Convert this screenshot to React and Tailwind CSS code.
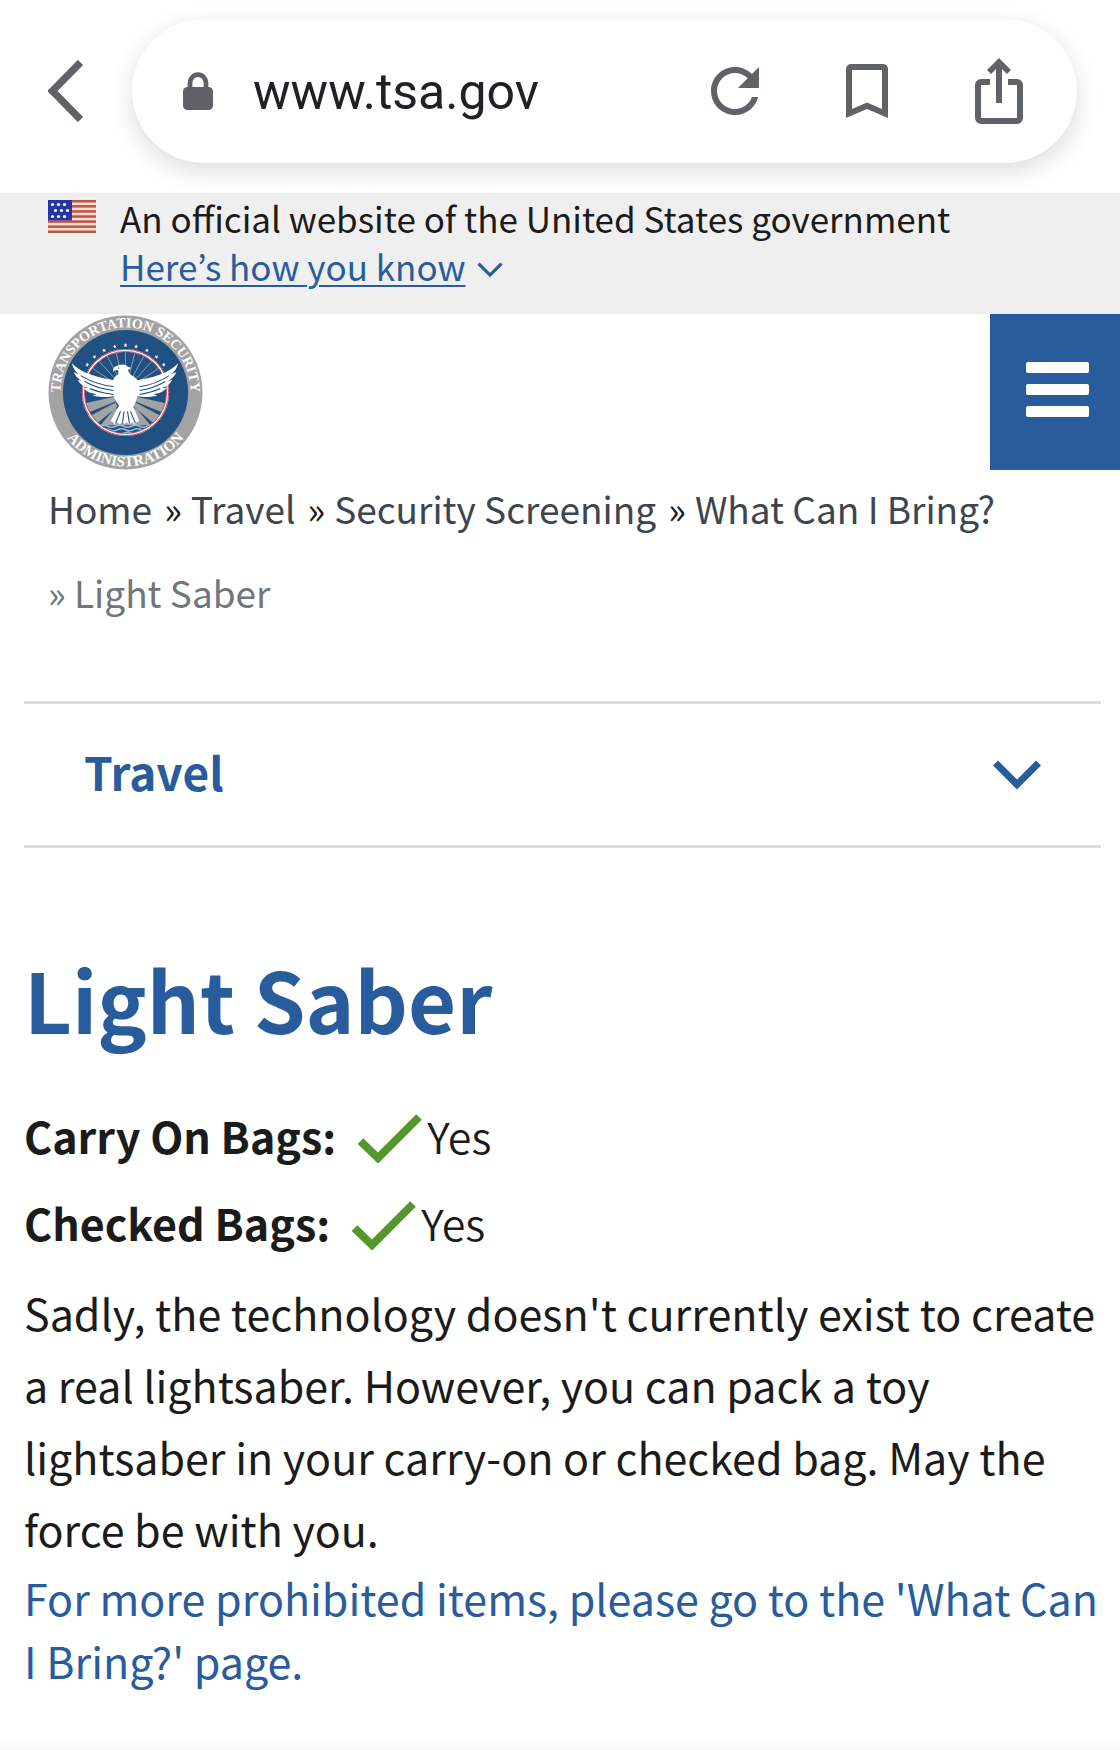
import React from "react";

const SANS = "font-['Noto_Sans_CJK_KR',sans-serif]";

function Check() {
  return (
    <svg viewBox="0 0 64 50" className="mt-1 h-[50px] w-16 shrink-0" fill="none" aria-hidden="true">
      <path d="M2.500 28 L20 45 L61 4" stroke="#53982b" strokeWidth="8" />
    </svg>
  );
}

function BrowserBar() {
  return (
    <div className="flex h-[193px] items-center pr-[43px] pb-[11px]">
      <button aria-label="Back" className="flex h-24 w-[132px] items-center justify-start pl-12">
        <svg viewBox="0 0 36 62" className="h-[62px] w-9" fill="none" aria-hidden="true">
          <path d="M32.500 2.500 L4.500 31 L32.500 59.500" stroke="#5f6368" strokeWidth="7.400" />
        </svg>
      </button>
      <div className="flex h-36 min-w-0 flex-1 items-center rounded-full bg-white pl-[51px] pr-[54px] shadow-[0_8px_24px_rgba(0,0,0,0.14)]">
        <svg viewBox="0 0 30 38" className="h-[38px] w-[30px] shrink-0" aria-hidden="true">
          <rect y="15" width="30" height="23" rx="4.500" fill="#5f6368" />
          <path d="M7 17 V11 a8 8.300 0 0 1 16 0 V17" fill="none" stroke="#5f6368" strokeWidth="4.800" />
        </svg>
        <input
          aria-label="Address"
          readOnly
          value="www.tsa.gov"
          className="ml-10 h-16 min-w-0 flex-1 bg-transparent pt-0.5 font-['Roboto',sans-serif] text-[50px] text-[#202124] outline-none"
        />
        <button aria-label="Reload" className="shrink-0">
          <svg viewBox="4 4 16 16" className="size-12" aria-hidden="true">
            <path
              fill="#5f6368"
              d="M17.650 6.350C16.200 4.900 14.210 4 12 4c-4.420 0-7.990 3.580-7.990 8s3.570 8 7.990 8c3.730 0 6.840-2.550 7.730-6h-2.080c-.82 2.330-3.040 4-5.650 4-3.310 0-6-2.690-6-6s2.690-6 6-6c1.660 0 3.140.69 4.220 1.780L13 11h7V4l-2.350 2.350z"
            />
          </svg>
        </button>
        <button aria-label="Bookmark" className="ml-[87px] shrink-0">
          <svg viewBox="0 0 42 54" className="h-[54px] w-[42px]" aria-hidden="true">
            <path d="M5 0 H37 a5 5 0 0 1 5 5 V54 L21 45 L0 54 V5 a5 5 0 0 1 5-5 Z M6 6 V45 L21 38.500 L36 45 V6 Z" fill="#5f6368" fillRule="evenodd" />
          </svg>
        </button>
        <button aria-label="Share" className="ml-[87px] shrink-0">
          <svg viewBox="0 0 48 66" className="h-[66px] w-12" aria-hidden="true">
            <path d="M24 0 L36 12 L32 16 L27 11 V45 H21 V11 L16 16 L12 12 Z" fill="#5f6368" />
            <path d="M15 21 H6 a6 6 0 0 0-6 6 V60 a6 6 0 0 0 6 6 H42 a6 6 0 0 0 6-6 V27 a6 6 0 0 0-6-6 H33 V27 H42 V60 H6 V27 H15 Z" fill="#5f6368" />
          </svg>
        </button>
      </div>
    </div>
  );
}

function Flag() {
  const stripes = [0, 1, 2, 3, 4, 5, 6];
  const stars = [[4, 4], [10, 4], [16, 4], [7, 10], [13, 10], [19, 10], [4, 16], [10, 16], [16, 16]];
  return (
    <svg viewBox="0 0 48 33" className="mt-[7px] h-[33px] w-12 shrink-0" role="img" aria-label="U.S. flag">
      <rect width="48" height="33" fill="#f8ded8" />
      {stripes.map((i) => (
        <rect key={i} y={i * 5.08} width="48" height="2.54" fill="#c05640" />
      ))}
      <rect width="24" height="20.500" fill="#2634a8" />
      {stars.map(([x, y]) => (
        <circle key={x + "-" + y} cx={x + 0.5} cy={y + 0.5} r="1.600" fill="#fff" />
      ))}
    </svg>
  );
}

function Seal() {
  const stars = [-54, -41, -27, -13, 0, 13, 27, 41, 54];
  const rays = [-70, -56, -42, -28, -14, 0, 14, 28, 42, 56, 70];
  return (
    <svg viewBox="0 0 156 156" className="size-[155px]" role="img" aria-label="Transportation Security Administration seal">
      <defs>
        <path id="seal-top" d="M14.500 95 A65.700 65.700 0 1 1 141.500 95" />
        <path id="seal-bottom" d="M7.500 102 A74.500 74.500 0 0 0 148.500 102" />
        <clipPath id="seal-disc"><circle cx="78" cy="78" r="41" /></clipPath>
      </defs>
      <circle cx="78" cy="78" r="77.500" fill="#a3a3a4" />
      <circle cx="78" cy="78" r="63" fill="#215083" />
      <g clipPath="url(#seal-disc)">
        {rays.map((a) => (
          <path key={a} d="M78 66 V36" stroke="#a9b3bf" strokeWidth="0.700" transform={`rotate(${a} 78 76)`} />
        ))}
        <path d="M68 82 L36 89 V100 L68 87 Z M68 88 L40 103 L46 112 L70 92 Z M67 94 L52 112 H104 L89 94 Z M88 82 L120 89 V100 L88 87 Z M88 88 L116 103 L110 112 L86 92 Z" fill="#a3a3a4" />
        <path d="M50 111 H106 L94 121 H62 Z" fill="#215083" />
        <path d="M52 112 q4-2 8 0 t8 0 8 0 8 0 8 0 8 0 8 0 M54 115.500 q4-2 8 0 t8 0 8 0 8 0 8 0 8 0 M60 119 q4-2 8 0 t8 0 8 0 8 0 8 0" fill="none" stroke="#8fbce0" strokeWidth="1.500" />
      </g>
      <circle cx="78" cy="78" r="42.500" fill="none" stroke="#fff" strokeWidth="2.800" />
      <circle cx="78" cy="78" r="43.400" fill="none" stroke="#c6415a" strokeWidth="0.900" />
      <circle cx="78" cy="78" r="41.400" fill="none" stroke="#c6415a" strokeWidth="0.800" />
      {stars.map((a) => (
        <path key={a} d="M0-2.200 L0.600-0.700 L2.100-0.700 L0.900 0.300 L1.300 1.800 L0 0.900 L-1.300 1.800 L-0.900 0.300 L-2.100-0.700 L-0.600-0.700 Z" fill="#fff" transform={`rotate(${a} 78 78) translate(78 30.500)`} />
      ))}
      <g fill="#fff">
        <path d="M65.500 56 q0-4 5-5.500 q7-2 10 1.500 l3 1 q-1 2-3 2 q1 5 6 7 l4 4 v13 q-2 11-6 15 h-10 q-8-7-9-16 v-12 q1-4 5-6 q1-4-1-5 l-3 1 q-1.500 2-1 0Z" />
        <path d="M72 90 L63 107 l3 1 1 3 2-3 3 2 3-2 2 2 2-2 3 2 3-2 2 3 2-3 3-1 L85 90Z" />
        <path d="M68 66 C58 64 36 61 24 48.500 c1 5 4 9 7 11 l-5-2 c2 5 5 7 9 9 l-5-1 c2 4 6 7 10 8 l-4 0 c3 4 8 6 13 6 l-4 1.500 c6 2 18 2 25 0Z" />
        <path d="M88 66 C99 64 119 61 131 48.500 c-1 5-4 9-7 11 l5-2 c-2 5-5 7-9 9 l5-1 c-2 4-6 7-10 8 l4 0 c-3 4-8 6-13 6 l4 1.500 c-6 2-16 2-23 0Z" />
      </g>
      <path d="M33 61 C44 68 57 71 66 72 M37 67 C47 73 58 75 66 76 M42 74 C51 78 60 79 66 80 M122 61 C111 68 101 71 92 72 M118 67 C108 73 100 75 92 76 M113 74 C104 78 98 79 92 80 M73 97 L68 109 M76.500 97 L75 109 M80 97 L82 109 M83 97 L88 109" fill="none" stroke="#215083" strokeWidth="1.100" />
      <circle cx="71" cy="53.500" r="0.700" fill="#215083" />
      <g fill="#fff" fontFamily="'Liberation Serif', serif" fontWeight="700">
        <text fontSize="14"><textPath href="#seal-top" startOffset="50%" textAnchor="middle">TRANSPORTATION SECURITY</textPath></text>
        <text fontSize="15"><textPath href="#seal-bottom" startOffset="50%" textAnchor="middle">ADMINISTRATION</textPath></text>
      </g>
    </svg>
  );
}

function Chevron({ className, width }) {
  return (
    <svg viewBox="0 0 48 30" className={className} fill="none" aria-hidden="true">
      <path d="M2.500 3 L24 24.500 L45.500 3" stroke="#285c9c" strokeWidth={width} />
    </svg>
  );
}

function BagRow({ label, answer }) {
  return (
    <div className="flex items-center">
      <dt className="font-bold">{label}</dt>
      <dd className="ml-[22px] flex items-center gap-[5px] font-[350]"><Check />{answer}</dd>
    </div>
  );
}

const crumbs = ["Home", "Travel", "Security Screening", "What Can I Bring?"];

export default function App() {
  return (
    <div className={`flex min-h-screen flex-col bg-white text-[#1b1b1b] ${SANS}`}>
      <BrowserBar />
      <section aria-label="Official government website" className="flex h-[121px] gap-6 bg-[#efefef] pl-12">
        <Flag />
        <div className="pt-px text-[35px] leading-[48px]">
          <p>An official website of the United States government</p>
          <button className="flex items-center gap-[11px] text-[#285c9c]">
            <span className="underline decoration-2 underline-offset-4">Here’s how you know</span>
            <Chevron className="mt-2 h-4 w-[26px]" width="6" />
          </button>
        </div>
      </section>
      <header className="flex h-[156px] items-center justify-between pl-12">
        <a href="#home"><Seal /></a>
        <button aria-label="Menu" className="flex h-full w-[130px] flex-col items-start justify-center gap-[11px] bg-[#285c9c] pb-1.5 pl-9">
          <span className="h-[11px] w-[63px] rounded-xs bg-white" />
          <span className="h-[11px] w-[63px] rounded-xs bg-white" />
          <span className="h-[11px] w-[63px] rounded-xs bg-white" />
        </button>
      </header>
      <nav aria-label="Breadcrumb" className="-mt-1 px-12 text-[37px] leading-[84px]">
        <ol className="flex flex-wrap gap-x-3">
          {crumbs.map((c, i) => (
            <li key={c} className="flex gap-[9px]">
              {i > 0 && <span>»</span>}
              <a href="#crumb" className="text-[#3d4551]">{c}</a>
            </li>
          ))}
          <li aria-current="page" className="text-[#71767a]">» Light Saber</li>
        </ol>
      </nav>
      <button className="ml-6 mr-[19px] mt-[67px] flex h-[147px] items-center justify-between border-y-[3px] border-[#dcdcdc] px-[60px] text-[46px] font-bold text-[#285c9c]">
        <span className="pb-1.5">Travel</span>
        <Chevron className="h-[30px] w-12" width="7" />
      </button>
      <main className="pt-23 pl-6 pr-4">
        <h1 className="text-[83px] font-bold leading-[116px] text-[#285c9c]">Light Saber</h1>
        <dl className="mt-9 text-[43px] leading-[87px]">
          <BagRow label="Carry On Bags:" answer="Yes" />
          <BagRow label="Checked Bags:" answer="Yes" />
        </dl>
        <p className="mt-2.5 text-[43px] leading-[72px]">
          Sadly, the technology doesn't currently exist to create a real lightsaber. However, you can pack a toy lightsaber in your carry-on or checked bag. May the force be with you.
        </p>
        <a href="#all" className="mt-0.5 block text-[43px] leading-[63px] text-[#285c9c]">
          For more prohibited items, please go to the 'What Can I Bring?' page.
        </a>
      </main>
      <div className="mt-auto h-2.5 bg-linear-to-b from-white to-[#f6f6f6]" />
    </div>
  );
}
